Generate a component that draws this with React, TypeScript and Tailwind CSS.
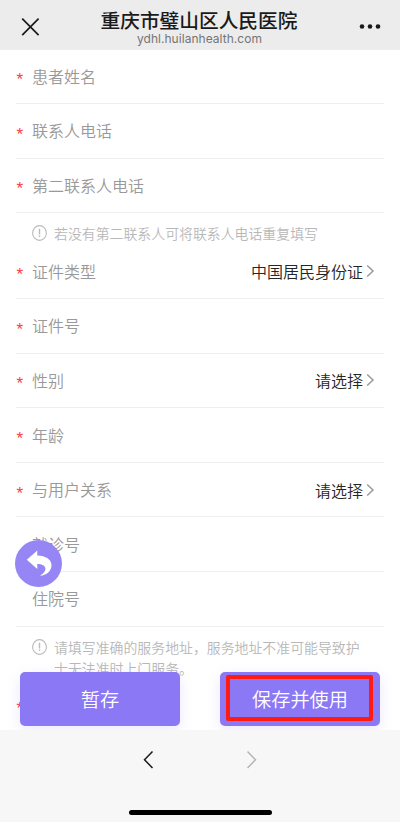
import type { ReactNode } from "react";

type Item =
  | { kind: "field"; label: string; required?: boolean; value?: string }
  | { kind: "hint"; lines: string[] };

const items: Item[] = [
  { kind: "field", label: "患者姓名", required: true },
  { kind: "field", label: "联系人电话", required: true },
  { kind: "field", label: "第二联系人电话", required: true },
  { kind: "hint", lines: ["若没有第二联系人可将联系人电话重复填写"] },
  { kind: "field", label: "证件类型", required: true, value: "中国居民身份证" },
  { kind: "field", label: "证件号", required: true },
  { kind: "field", label: "性别", required: true, value: "请选择" },
  { kind: "field", label: "年龄", required: true },
  { kind: "field", label: "与用户关系", required: true, value: "请选择" },
  { kind: "field", label: "就诊号" },
  { kind: "field", label: "住院号" },
  { kind: "hint", lines: ["请填写准确的服务地址，服务地址不准可能导致护", "士无法准时上门服务。"] },
  { kind: "field", label: "", required: true },
];

const Header = () => (
  <header className="flex h-[49.5px] shrink-0 items-start justify-between bg-[#ececec]">
    <svg className="ml-[21px] mt-[17px]" width="20" height="20" viewBox="0 0 20 20" fill="none" stroke="#1a1a1a" strokeWidth="1.7">
      <path d="M1.2 1.7 17.6 18.1M17.6 1.7 1.2 18.1" />
    </svg>
    <div className="flex flex-col items-center pr-[2px] pt-[8px]">
      <h1 className="text-[19.7px] font-medium leading-[24px] text-[#1a1a1a]">重庆市璧山区人民医院</h1>
      <p className="pl-px font-[Inter,sans-serif] text-[12px] leading-[13px] tracking-[0.04px] text-[#757575]">ydhl.huilanhealth.com</p>
    </div>
    <svg className="mr-[19px] mt-[23px]" width="22" height="7" viewBox="0 0 22 7" fill="#1a1a1a">
      <circle cx="3" cy="3.5" r="2.3" />
      <circle cx="11" cy="3.5" r="2.3" />
      <circle cx="19" cy="3.5" r="2.3" />
    </svg>
  </header>
);

const Field = ({ label, required, value }: { label: string; required?: boolean; value?: string }) => (
  <div className="mx-4 flex h-[54.6px] shrink-0 items-center border-b border-[#efefef] text-[16px]">
    <span className="w-4 pl-[0.5px] pt-[8px] font-['Liberation_Sans',sans-serif] text-[17px] leading-5 text-[#ff3b3b]">
      {required && "*"}
    </span>
    <span className="pb-[0.8px] font-[350] text-[#999]">{label}</span>
    {value && (
      <span className="ml-auto mr-[9px] flex items-center gap-[3px] font-[350] text-[#262626]">
        {value}
        <svg width="9" height="14" viewBox="0 0 9 14" fill="none" stroke="#999" strokeWidth="1.5">
          <path d="M1.2 1.5 7 7 1.2 12.5" />
        </svg>
      </span>
    )}
  </div>
);

const Hint = ({ lines }: { lines: string[] }) => (
  <div className="flex shrink-0 gap-[7px] pb-[0.3px] pl-8 pt-[10.1px] text-[13.9px] font-[350] leading-[20.8px] text-[#b8b8b8]">
    <svg className="mt-[2px] shrink-0" width="15" height="16" viewBox="0 0 15 16" fill="none" stroke="#bbb" strokeWidth="1.1">
      <ellipse cx="7.5" cy="8" rx="6.9" ry="7.4" />
      <path d="M7.5 3.8v5.6M7.5 10.6v1.5" strokeWidth="1.4" />
    </svg>
    <p>
      {lines.map(l => (
        <span key={l} className="block whitespace-nowrap">{l}</span>
      ))}
    </p>
  </div>
);

const ActionButton = ({ children }: { children: ReactNode }) => (
  <button className="flex h-[53.5px] w-[160px] items-center justify-center rounded-[5px] bg-[#8b78f5] pt-px text-[19.2px] font-[350] text-white shadow-[0_4px_14px_rgba(139,120,245,0.16)]">
    {children}
  </button>
);

export default function App() {
  return (
    <div className="flex h-[822px] w-[400px] flex-col overflow-hidden bg-white font-['Noto_Sans_CJK_SC',sans-serif]">
      <Header />
      <main className="relative flex h-[680.5px] shrink-0 flex-col overflow-hidden">
        {items.map((item, i) =>
          item.kind === "field" ? <Field key={i} {...item} /> : <Hint key={i} lines={item.lines} />
        )}

        <button className="absolute left-[15px] top-[490.5px] flex size-[47px] items-center justify-center rounded-full bg-[#9686f5]">
          <svg width="47" height="47" viewBox="0 0 47 47" fill="#fff">
            <path d="M11.8 19.8 22.3 10.5v5c8.5.2 14.2 4 14.2 9.7 0 5.8-4.8 10.2-11.5 10.6 3.6-2.2 5.6-4.6 5.4-7.2C30.2 25.4 27.2 24 22.3 23.9v5.2Z" />
          </svg>
        </button>

        <div className="absolute inset-x-5 top-[622.6px] flex justify-between">
          <ActionButton>暂存</ActionButton>
          <div className="relative">
            <ActionButton>保存并使用</ActionButton>
            <div className="absolute left-[6px] top-[3px] h-[46px] w-[147px] rounded-[2px] border-[4.5px] border-[#ff1a12]" />
          </div>
        </div>
      </main>

      <footer className="flex flex-1 flex-col items-center bg-[#f7f7f7]">
        <nav className="flex w-[115px] justify-between pt-[20px]">
          <svg width="11" height="19" viewBox="0 0 11 19" fill="none" stroke="#1a1a1a" strokeWidth="1.5">
            <path d="M9.5 1.5 1.5 9.7 9.5 18" />
          </svg>
          <svg className="-ml-px mr-px" width="11" height="19" viewBox="0 0 11 19" fill="none" stroke="#b5b5b5" strokeWidth="1.5">
            <path d="M1.5 1.5 9.5 9.7 1.5 18" />
          </svg>
        </nav>
        <div className="mt-[41px] h-[5px] w-[143px] rounded-full bg-black" />
      </footer>
    </div>
  );
}
